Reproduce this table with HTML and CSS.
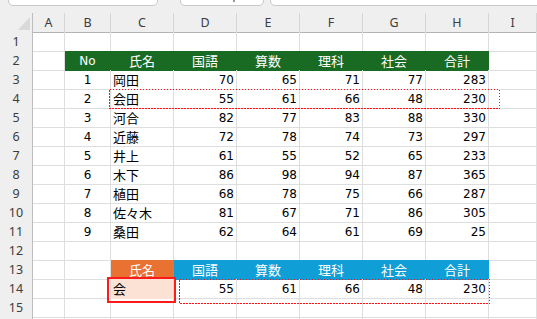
FILE: index.html
```html
<!DOCTYPE html>
<html lang="ja">
<head>
<meta charset="utf-8">
<link rel="stylesheet" href="styles.css">
</head>
<body>
<div class="app">
  <div class="toolbar">
    <div class="tb tb1"></div>
    <div class="tb tb2"><span class="chev"></span></div>
    <div class="tb tb3"></div>
  </div>
  <div class="sheet">
    <div class="row colhead">
      <div class="corner"><span class="tri"></span></div>
      <div class="ch">A</div><div class="ch">B</div><div class="ch">C</div><div class="ch">D</div><div class="ch">E</div><div class="ch">F</div><div class="ch">G</div><div class="ch">H</div><div class="ch">I</div>
    </div>
    <div class="row"><div class="rh">1</div><div class="c"></div><div class="c"></div><div class="c"></div><div class="c"></div><div class="c"></div><div class="c"></div><div class="c"></div><div class="c"></div><div class="c"></div></div>
    <div class="row"><div class="rh">2</div><div class="c"></div><div class="c g m n">No</div><div class="c g m j">氏名</div><div class="c g m j">国語</div><div class="c g m j">算数</div><div class="c g m j">理科</div><div class="c g m j">社会</div><div class="c g m j">合計</div><div class="c"></div></div>
    <div class="row"><div class="rh">3</div><div class="c"></div><div class="c m n">1</div><div class="c j">岡田</div><div class="c r n">70</div><div class="c r n">65</div><div class="c r n">71</div><div class="c r n">77</div><div class="c r n">283</div><div class="c"></div></div>
    <div class="row"><div class="rh">4</div><div class="c"></div><div class="c m n">2</div><div class="c j">会田</div><div class="c r n">55</div><div class="c r n">61</div><div class="c r n">66</div><div class="c r n">48</div><div class="c r n">230</div><div class="c"></div></div>
    <div class="row"><div class="rh">5</div><div class="c"></div><div class="c m n">3</div><div class="c j">河合</div><div class="c r n">82</div><div class="c r n">77</div><div class="c r n">83</div><div class="c r n">88</div><div class="c r n">330</div><div class="c"></div></div>
    <div class="row"><div class="rh">6</div><div class="c"></div><div class="c m n">4</div><div class="c j">近藤</div><div class="c r n">72</div><div class="c r n">78</div><div class="c r n">74</div><div class="c r n">73</div><div class="c r n">297</div><div class="c"></div></div>
    <div class="row"><div class="rh">7</div><div class="c"></div><div class="c m n">5</div><div class="c j">井上</div><div class="c r n">61</div><div class="c r n">55</div><div class="c r n">52</div><div class="c r n">65</div><div class="c r n">233</div><div class="c"></div></div>
    <div class="row"><div class="rh">8</div><div class="c"></div><div class="c m n">6</div><div class="c j">木下</div><div class="c r n">86</div><div class="c r n">98</div><div class="c r n">94</div><div class="c r n">87</div><div class="c r n">365</div><div class="c"></div></div>
    <div class="row"><div class="rh">9</div><div class="c"></div><div class="c m n">7</div><div class="c j">植田</div><div class="c r n">68</div><div class="c r n">78</div><div class="c r n">75</div><div class="c r n">66</div><div class="c r n">287</div><div class="c"></div></div>
    <div class="row"><div class="rh">10</div><div class="c"></div><div class="c m n">8</div><div class="c j">佐々木</div><div class="c r n">81</div><div class="c r n">67</div><div class="c r n">71</div><div class="c r n">86</div><div class="c r n">305</div><div class="c"></div></div>
    <div class="row"><div class="rh">11</div><div class="c"></div><div class="c m n">9</div><div class="c j">桑田</div><div class="c r n">62</div><div class="c r n">64</div><div class="c r n">61</div><div class="c r n">69</div><div class="c r n">25</div><div class="c"></div></div>
    <div class="row"><div class="rh">12</div><div class="c"></div><div class="c"></div><div class="c"></div><div class="c"></div><div class="c"></div><div class="c"></div><div class="c"></div><div class="c"></div><div class="c"></div></div>
    <div class="row"><div class="rh">13</div><div class="c"></div><div class="c"></div><div class="c o m j">氏名</div><div class="c b m j">国語</div><div class="c b m j">算数</div><div class="c b m j">理科</div><div class="c b m j">社会</div><div class="c b m j">合計</div><div class="c"></div></div>
    <div class="row"><div class="rh">14</div><div class="c"></div><div class="c"></div><div class="c lo j">会</div><div class="c r n">55</div><div class="c r n">61</div><div class="c r n">66</div><div class="c r n">48</div><div class="c r n">230</div><div class="c"></div></div>
    <div class="row"><div class="rh">15</div><div class="c"></div><div class="c"></div><div class="c"></div><div class="c"></div><div class="c"></div><div class="c"></div><div class="c"></div><div class="c"></div><div class="c"></div></div>
    <div class="row"><div class="rh"></div><div class="c"></div><div class="c"></div><div class="c"></div><div class="c"></div><div class="c"></div><div class="c"></div><div class="c"></div><div class="c"></div><div class="c"></div></div>
  </div>
  <svg class="dot dot1" width="391" height="20" viewBox="0 0 391 20"><rect x="0.5" y="0.5" width="390" height="19" fill="none" stroke="#ff1010" stroke-width="1" stroke-dasharray="1.5 1.5" shape-rendering="crispEdges"/></svg>
  <svg class="dot dot2" width="311" height="25" viewBox="0 0 311 25"><rect x="0.5" y="0.5" width="310" height="24" fill="none" stroke="#ff1010" stroke-width="1" stroke-dasharray="1.5 1.5" shape-rendering="crispEdges"/></svg>
  <div class="sel"></div>
</div>
</body>
</html>
```
FILE: styles.css
```css
* { box-sizing: border-box; }
html, body { margin: 0; padding: 0; background: #fff; }
body { width: 537px; height: 319px; overflow: hidden; }
.app { position: relative; width: 537px; height: 319px; overflow: hidden; }

.toolbar {
  height: 13px;
  background: #efefef;
  display: flex;
  align-items: flex-start;
  padding-left: 8px;
}
.tb {
  height: 12px;
  margin-top: -6px;
  background: #fff;
  border: 1px solid #c9c9c9;
  border-radius: 5px;
  position: relative;
}
.tb1 { width: 150px; }
.tb2 { width: 84px; margin-left: 22px; }
.tb3 { flex: 1; margin-left: 6px; margin-right: -12px; }
.chev {
  position: absolute;
  left: 52px; top: 5px;
  width: 2px; height: 2px;
  background: #9a9a9a;
}

.sheet { display: flex; flex-direction: column; }
.row {
  display: grid;
  grid-template-columns: 33px 32px 46px 63px 63px 63px 63px 63px 63px 1fr;
  height: 19px;
  flex: none;
}

.corner {
  background: #efefef;
  border-right: 1px solid #bdbdbd;
  border-bottom: 1px solid #b3b3b3;
  display: flex;
  justify-content: flex-end;
  align-items: flex-end;
  padding: 0 2px 2px 0;
}
.tri {
  width: 12px; height: 13px;
  background: #d9d9d9;
  clip-path: polygon(100% 0, 100% 100%, 0 100%);
}
.ch, .rh {
  background: #efefef;
  text-align: center;
  font-family: "Noto Sans", "Open Sans", sans-serif;
  font-size: 12.5px;
  color: #3d3d3d;
  line-height: 18px;
  padding-top: 1px;
}
.ch {
  border-right: 1px solid #d6d6d6;
  border-bottom: 1px solid #b3b3b3;
}
.rh {
  border-right: 1px solid #bdbdbd;
  border-bottom: 1px solid #d6d6d6;
}

.c {
  border-right: 1px solid #dedede;
  border-bottom: 1px solid #dedede;
  padding: 0 2px;
  white-space: nowrap;
  overflow: hidden;
  color: #000;
}
.n {
  font-family: "DejaVu Sans", "Noto Sans CJK JP", sans-serif;
  font-size: 12px;
  line-height: 15px;
  padding-top: 3px;
}
.j {
  font-family: "Noto Sans CJK JP", "DejaVu Sans", sans-serif;
  font-size: 13px;
  line-height: 15px;
  padding-top: 2px;
}
.r { text-align: right; }
.m { text-align: center; }
.g { background: #196b24; border-color: #196b24; color: #fff; }
.b { background: #0f9ed5; border-color: #0f9ed5; color: #fff; }
.o { background: #e97132; border-color: #e97132; color: #fff; }
.lo { background: #fbe2d5; border-bottom-color: #fbe2d5; }

.dot { position: absolute; display: block; }
.dot1 { left: 109px; top: 89px; }
.dot2 { left: 179px; top: 279px; }
.sel {
  position: absolute;
  left: 107px; top: 277px;
  width: 69px; height: 26px;
  border: 2px solid #ff1a1a;
}
```
